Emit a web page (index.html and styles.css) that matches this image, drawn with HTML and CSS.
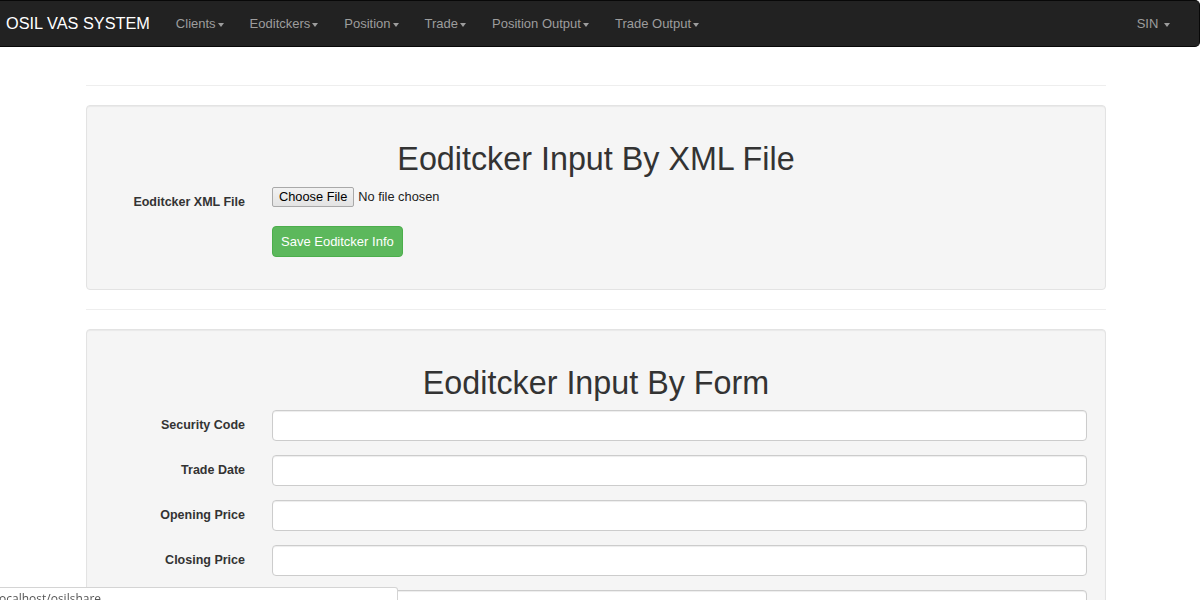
FILE: index.html
```html
<!DOCTYPE html>
<html lang="en">
<head>
<meta charset="utf-8">
<title>OSIL VAS SYSTEM</title>
<link rel="stylesheet" href="styles.css">
</head>
<body>
<nav class="navbar">
  <a class="brand" href="#">OSIL VAS SYSTEM</a>
  <ul class="nav">
    <li><a href="#">Clients<span class="caret"></span></a></li>
    <li><a href="#">Eoditckers<span class="caret"></span></a></li>
    <li><a href="#">Position<span class="caret"></span></a></li>
    <li><a href="#">Trade<span class="caret"></span></a></li>
    <li><a href="#">Position Output<span class="caret"></span></a></li>
    <li><a href="#">Trade Output<span class="caret"></span></a></li>
  </ul>
  <ul class="nav nav-right">
    <li><a href="#">SIN <span class="caret"></span></a></li>
  </ul>
</nav>

<main class="container">
  <hr class="divider">
  <section class="well">
    <h1 class="well-title">Eoditcker Input By XML File</h1>
    <form class="form">
      <div class="form-group">
        <label class="form-label" for="xmlfile">Eoditcker XML File</label>
        <div class="form-field">
          <div class="file-input">
            <span class="file-btn">Choose File</span>
            <span class="file-name">No file chosen</span>
          </div>
        </div>
      </div>
      <div class="form-group">
        <div class="form-label"></div>
        <div class="form-field">
          <button type="button" class="btn-success">Save Eoditcker Info</button>
        </div>
      </div>
    </form>
  </section>
  <hr class="divider">
  <section class="well">
    <h1 class="well-title">Eoditcker Input By Form</h1>
    <form class="form">
      <div class="form-group">
        <label class="form-label">Security Code</label>
        <div class="form-field"><input class="form-control" type="text"></div>
      </div>
      <div class="form-group">
        <label class="form-label">Trade Date</label>
        <div class="form-field"><input class="form-control" type="text"></div>
      </div>
      <div class="form-group">
        <label class="form-label">Opening Price</label>
        <div class="form-field"><input class="form-control" type="text"></div>
      </div>
      <div class="form-group">
        <label class="form-label">Closing Price</label>
        <div class="form-field"><input class="form-control" type="text"></div>
      </div>
      <div class="form-group">
        <label class="form-label">Volume</label>
        <div class="form-field"><input class="form-control" type="text"></div>
      </div>
    </form>
  </section>
</main>

<div class="status-bar"><span class="status-text">localhost/osilshare</span></div>
</body>
</html>
```

FILE: styles.css
```css
* { box-sizing: border-box; }

body {
  margin: 0;
  font-family: "Liberation Sans", Arial, sans-serif;
  font-size: 13px;
  line-height: 19px;
  color: #333;
  background: #fff;
}

.navbar {
  display: flex;
  align-items: stretch;
  height: 47px;
  background: #222;
  border: 1px solid #080808;
  border-left: 0;
  border-radius: 0 5px 5px 0;
}

.brand {
  display: block;
  padding: 13px 13px 0 6px;
  font-size: 16.3px;
  line-height: 19px;
  color: #fff;
  text-decoration: none;
}

.nav {
  display: flex;
  margin: 0;
  padding: 0;
  list-style: none;
}

.nav a {
  display: block;
  padding: 13px 13px 0;
  font-size: 13px;
  line-height: 19px;
  color: #9d9d9d;
  text-decoration: none;
}

.nav-right {
  margin-left: auto;
  margin-right: 16px;
}

.caret {
  display: inline-block;
  width: 0;
  height: 0;
  margin-left: 2px;
  vertical-align: middle;
  border-top: 4px solid #9d9d9d;
  border-left: 3px solid transparent;
  border-right: 3px solid transparent;
}

.container {
  width: 1020px;
  margin-left: 86px;
  padding-top: 19px;
}

.divider {
  margin: 19px 0;
  border: 0;
  border-top: 1px solid #eee;
}

.well {
  padding: 18px;
  background: #f5f5f5;
  border: 1px solid #e3e3e3;
  border-radius: 4px;
  box-shadow: inset 0 1px 1px rgba(0, 0, 0, 0.05);
}

.well-title {
  margin: 18px 0 9px;
  font-size: 32.3px;
  font-weight: 400;
  line-height: 1.1;
  text-align: center;
  color: #333;
}

.form-group {
  display: flex;
  gap: 27px;
  margin-bottom: 14px;
}

.form-label {
  flex: 0 0 140px;
  padding-top: 6px;
  font-size: 12.5px;
  font-weight: 700;
  text-align: right;
  color: #333;
}

.form-field {
  flex: 1;
}

.file-input {
  display: flex;
  align-items: flex-start;
  height: 25px;
  font-size: 12.8px;
}

.file-btn {
  display: inline-block;
  height: 20px;
  padding: 0 6px;
  line-height: 18px;
  color: #000;
  background: linear-gradient(#f2f2f2, #e3e3e3);
  border: 1px solid #a9a9a9;
  border-radius: 2px;
}

.file-name {
  margin-left: 4px;
  line-height: 20px;
  color: #222;
}

.btn-success {
  height: 31px;
  padding: 0 8px;
  font-family: inherit;
  font-size: 13px;
  line-height: 29px;
  color: #fff;
  background: #5cb85c;
  border: 1px solid #4cae4c;
  border-radius: 4px;
}

.form-control {
  display: block;
  width: 100%;
  height: 31px;
  padding: 5px 11px;
  font-family: inherit;
  font-size: 13px;
  background: #fff;
  border: 1px solid #ccc;
  border-radius: 4px;
  box-shadow: inset 0 1px 1px rgba(0, 0, 0, 0.075);
}

.status-bar {
  position: fixed;
  left: 0;
  top: 587px;
  width: 398px;
  height: 24px;
  overflow: hidden;
  background: #fff;
  border: 1px solid #d4d4d4;
  border-left: 0;
  border-radius: 0 3px 0 0;
}

.status-text {
  display: block;
  margin-left: -4px;
  padding-top: 3px;
  font-family: "Open Sans", "Noto Sans", sans-serif;
  font-size: 12px;
  line-height: 16px;
  color: #555;
  white-space: nowrap;
}
```
